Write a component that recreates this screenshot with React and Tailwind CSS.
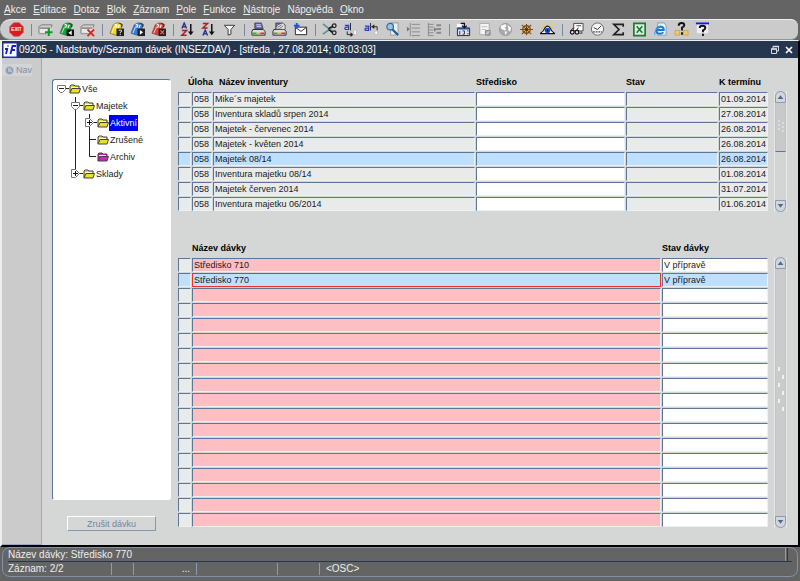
import { useState } from "react";

const menuItems = [
  ["", "A", "kce"],
  ["", "E", "ditace"],
  ["", "D", "otaz"],
  ["", "B", "lok"],
  ["", "Z", "áznam"],
  ["", "P", "ole"],
  ["", "F", "unkce"],
  ["", "N", "ástroje"],
  ["Náp", "o", "věda"],
  ["", "O", "kno"],
];

const inventories = [
  { name: "Mike´s majetek", date: "01.09.2014" },
  { name: "Inventura skladů srpen 2014", date: "27.08.2014" },
  { name: "Majetek - červenec 2014", date: "26.08.2014" },
  { name: "Majetek - květen 2014", date: "26.08.2014" },
  { name: "Majetek 08/14", date: "26.08.2014" },
  { name: "Inventura majetku 08/14", date: "01.08.2014" },
  { name: "Majetek červen 2014", date: "31.07.2014" },
  { name: "Inventura majetku 06/2014", date: "01.06.2014" },
];

const batches = [
  { name: "Středisko 710", state: "V přípravě" },
  { name: "Středisko 770", state: "V přípravě" },
  ...Array.from({ length: 16 }, () => ({ name: "", state: "" })),
];

const Record = () => (
  <>
    <path d="M1 5h13v7H1z" fill="#d9d9d9" />
    <path d="M1 12V5l3-2h11l-1 3" fill="none" stroke="#7d7d7d" />
    <path d="M2 6.500h11" stroke="#555" />
    <path d="M2 8.500h11M2 10.500h8" stroke="#f7f7f7" />
    <path d="M1 12.500h8" stroke="#8a8a8a" />
  </>
);

const Book = ({ color }) => (
  <>
    <path d="M1 12L4.500 3 8 1h3l3 2-3 9-4 2z" fill={color} stroke="#4a4a3a" strokeWidth=".6" />
    <path d="M6 3.500l2-1.500M7 6l1.500-3M9.500 6.500L11 3" fill="none" stroke="#fff" strokeWidth="1.200" />
    <path d="M3 12l3-7" stroke="#fff" strokeWidth=".8" />
    <path d="M11 1.500l3 1-.5 3" fill="none" stroke="#222" />
  </>
);

const Printer = () => (
  <>
    <path d="M4 1h7l2 6H4z" fill="#5a60b8" stroke="#444" strokeWidth=".8" />
    <path d="M5.500 3h5M6 5h5" stroke="#dfe3ff" />
    <path d="M2 8h11l2 2v4H1v-4z" fill="#ddd" stroke="#222" />
    <path d="M2 12h4" stroke="#1b1" strokeWidth="1.500" />
    <path d="M6 12h4" stroke="#eb0" strokeWidth="1.500" />
    <path d="M10 12h4" stroke="#d22" strokeWidth="1.500" />
  </>
);

const icons = {
  addRecord: (
    <>
      <Record />
      <path d="M11.500 7v8M7.500 11h8" stroke="#0a9c1c" strokeWidth="2.200" />
    </>
  ),
  prevBlock: (
    <>
      <Book color="#12a53a" />
      <path d="M8 8h8v7H8z" fill="#111" />
      <path d="M13.500 9v5L10 11.500z" fill="#fff" />
    </>
  ),
  removeRecord: (
    <>
      <Record />
      <path d="M8 8l7 7M15 8l-7 7" stroke="#e0231c" strokeWidth="2" />
    </>
  ),
  enterQuery: (
    <>
      <Book color="#f2d51f" />
      <path d="M8 7h8v8H8z" fill="#222" />
      <path d="M10.500 9.500q0-1 1.500-1t1.500 1q0 1-1.500 1.500v1M12 13v1" fill="none" stroke="#fff" />
    </>
  ),
  runQuery: (
    <>
      <Book color="#2f7de0" />
      <path d="M8 7h8v8H8z" fill="#222" />
      <path d="M10.500 8.500v5L14 11z" fill="#fff" />
    </>
  ),
  cancelQuery: (
    <>
      <Book color="#e23b35" />
      <path d="M8 7h8v8H8z" fill="#222" />
      <path d="M10 9l4 4M14 9l-4 4" stroke="#f66" strokeWidth="1.200" />
    </>
  ),
  sortAsc: (
    <>
      <path d="M2 7l2.500-6L7 7M3 5h3" fill="none" stroke="#33358c" strokeWidth="1.500" />
      <path d="M2 9h5l-5 5h5" fill="none" stroke="#a3222a" strokeWidth="1.600" />
      <path d="M11.500 2v9" stroke="#111" strokeWidth="1.600" />
      <path d="M8.500 10h6l-3 4z" fill="#111" />
    </>
  ),
  sortDesc: (
    <>
      <path d="M2 1.500h5L2 6.500h5" fill="none" stroke="#a3222a" strokeWidth="1.600" />
      <path d="M2 14.500l2.500-6 2.500 6M3 12.500h3" fill="none" stroke="#33358c" strokeWidth="1.500" />
      <path d="M11.500 2v9" stroke="#111" strokeWidth="1.600" />
      <path d="M8.500 10h6l-3 4z" fill="#111" />
    </>
  ),
  filter: <path d="M2.500 3.500h11L9.500 8v5l-3 1V8z" fill="#f4f4f4" stroke="#333" />,
  print: <Printer />,
  printPreview: (
    <>
      <Printer />
      <path d="M3.500 7.500L6 3l5-2 3 2v5z" fill="#e6e6e6" stroke="#555" />
      <path d="M6 6l4-3M8 7l4-3" fill="none" stroke="#666" />
    </>
  ),
  mail: (
    <>
      <path d="M2.500 5.500h12v8h-12z" fill="#fff" stroke="#222" />
      <path d="M3 6l5.500 4L14 6" fill="none" stroke="#222" />
      <path d="M4 1v6M1 4h6" stroke="#1b55df" strokeWidth="2" />
    </>
  ),
  cut: (
    <>
      <path d="M1 2l10 8M1 13L12 5" stroke="#5c8f8d" strokeWidth="1.800" />
      <path d="M7 7l5-3M7 8l4 3" stroke="#111" strokeWidth="1.500" />
      <circle cx="13" cy="4" r="2" fill="none" stroke="#222" strokeWidth="1.300" />
      <circle cx="13" cy="11.500" r="2" fill="none" stroke="#222" strokeWidth="1.300" />
    </>
  ),
  copy: (
    <>
      <path d="M2 3.500h4V8H3.500Q2 8 2 6.800T3.500 5.500H6" fill="none" stroke="#2837dc" strokeWidth="1.300" />
      <path d="M8 1v8M4.500 10v3.500h4" fill="none" stroke="#222" />
      <path d="M8 11v5l3-2.500z" fill="#222" />
      <path d="M11.500 8.500h3v5h-3z" fill="#fff" stroke="#bbb" />
    </>
  ),
  paste: (
    <>
      <path d="M1 4.500h4V9H2.500Q1 9 1 7.800T2.500 6.500H5" fill="none" stroke="#2837dc" strokeWidth="1.300" />
      <path d="M7 1v8M8 5h6v4" fill="none" stroke="#222" />
      <path d="M11 2.500v5L8 5z" fill="#222" />
      <path d="M11.500 9.500h3v4h-3z" fill="#fff" stroke="#bbb" />
    </>
  ),
  find: (
    <>
      <path d="M6 1h8v10l-3 3H6z" fill="#eee" stroke="#999" />
      <circle cx="5.500" cy="5" r="3.500" fill="#8cc9ee" stroke="#38698f" strokeWidth="1.300" />
      <path d="M8 8l6 6" stroke="#255f9c" strokeWidth="2.500" />
    </>
  ),
  indent: (
    <>
      <path d="M4.500 1v14M6 2.500h9M6 6.500h9M6 10.500h9M6 14.500h9" stroke="#8a8a8a" />
      <path d="M1 5v5l3-2.500z" fill="#777" />
    </>
  ),
  outline: (
    <>
      <path d="M1.500 1v13M1 2.500h6M1 5.500h6M1 8.500h6M1 11.500h6M1 14.500h6" stroke="#8a8a8a" />
      <path d="M10 3.500h5M10 7.500h5M10 11.500h5" stroke="#8a8a8a" strokeWidth="2" />
      <path d="M7.500 5.500v5l3-2.500z" fill="#777" />
    </>
  ),
  calendar: (
    <>
      <path d="M1 2h5v4H1z" fill="#fff" />
      <path d="M1.500 6.500h13v8h-13z" fill="#dfe2ee" stroke="#222" />
      <path d="M1 7h14" stroke="#234ab6" strokeWidth="2" />
      <path d="M4 9.500v4M7 9.500h2v3.500H7M12 9.500h1.500M12 12.500h1.500" fill="none" stroke="#333" />
      <path d="M5 1.500h4V5M6.500 4L9 6l2.500-2" fill="none" stroke="#111" strokeWidth="1.300" />
    </>
  ),
  note: (
    <>
      <path d="M3 1.500h10v12H3z" fill="#f5f5f5" stroke="#aaa" />
      <path d="M5 5h6M5 8h4" stroke="#bbb" />
      <path d="M9 9h5v5H9z" fill="#aaa" stroke="#888" />
      <path d="M10 13l3-3" stroke="#eee" />
    </>
  ),
  globe: (
    <>
      <circle cx="8" cy="8" r="6.500" fill="#a9a9a9" stroke="#999" />
      <path d="M3 4l5-2 1 3-2 1 2 2-2 1-4-2zM10 3l4 3-1 4-2-1 0-3zM7 10l3 0-2 4z" fill="#fafafa" />
    </>
  ),
  wheel: (
    <>
      <circle cx="8" cy="8" r="4" fill="#f0d78d" stroke="#804d14" strokeWidth="1.500" />
      <path d="M1 8h14M8 2v12M3 3l10 10M13 3L3 13" stroke="#804d14" strokeWidth="1.200" />
      <circle cx="8" cy="8" r="1.500" fill="#51300d" />
    </>
  ),
  eye: (
    <>
      <path d="M8 0v3M3 2l2 3M13 2l-2 3M1 6l3 1M15 6l-3 1" stroke="#efcf2c" strokeWidth="1.300" />
      <path d="M0 12.500Q4 10 5.500 6 8 3 10.500 6 12 10 16 12.500z" fill="#fff" stroke="#111" strokeWidth="1.300" />
      <circle cx="8" cy="9" r="3" fill="#1b4be0" />
      <circle cx="8" cy="9" r="1" fill="#000" />
    </>
  ),
  glasses: (
    <>
      <path d="M5 1.500h10v8H5z" fill="#fff" stroke="#444" />
      <path d="M8 4h5M13 10l1 2h-3" fill="none" stroke="#444" />
      <circle cx="3.500" cy="11" r="2" fill="#ddd" stroke="#111" strokeWidth="1.300" />
      <circle cx="8.500" cy="11" r="2" fill="#ddd" stroke="#111" strokeWidth="1.300" />
      <path d="M2 9l3-3M8 9l2-3" stroke="#111" />
    </>
  ),
  clock: (
    <>
      <circle cx="8" cy="7.500" r="6.500" fill="#f5f5f5" stroke="#666" />
      <path d="M8 8l4-4M8 8L4 6" stroke="#333" />
      <path d="M3 10.500h10" stroke="#777" strokeWidth="2" strokeDasharray="2 1" />
    </>
  ),
  sum: <path d="M13 5V2.500H3L8.500 8 3 13.500h10V11" fill="none" stroke="#222" strokeWidth="1.800" />,
  sheet: (
    <>
      <path d="M2 1.500h12v13H2z" fill="#d9efdc" stroke="#1a7a36" strokeWidth="1.800" />
      <path d="M5 4.500l6 7M11 4.500l-6 7" stroke="#1a7a36" strokeWidth="1.700" />
    </>
  ),
  browser: (
    <>
      <path d="M5 1h7l2 3v10H5z" fill="#edf3fa" stroke="#7e9ab8" />
      <path d="M3.500 8.500h8Q11.500 5 8 5T3.500 8.500 7.500 12.500q2.500 0 3.500-1.500" fill="none" stroke="#1d7bd0" strokeWidth="2" />
      <path d="M2 14Q0 10 8 3.500" fill="none" stroke="#4ca5e8" />
    </>
  ),
  who: (
    <>
      <path d="M1 9h5v5H1zM10 9h5v5h-5z" fill="#f1c767" stroke="#c79a3b" strokeWidth=".7" />
      <path d="M5 4q0-3 3-3t3 2.500Q11 5 8.500 6v3" fill="none" stroke="#111" strokeWidth="2" />
      <path d="M7.500 11h2v2.500h-2z" fill="#111" />
    </>
  ),
  help: (
    <>
      <path d="M2 1h12v11H2z" fill="#eee" />
      <path d="M1 1.500h14" stroke="#1717e8" strokeWidth="2" />
      <path d="M5 6.500q0-2.500 3-2.500t3 2Q11 8 8.500 9v2" fill="none" stroke="#111" strokeWidth="2" />
      <path d="M7.500 12.500h2V15h-2z" fill="#111" />
    </>
  ),
};

const toolGroups = [
  [["addRecord", "Nový záznam"], ["prevBlock", "Předchozí blok"], ["removeRecord", "Smazat záznam"]],
  [["enterQuery", "Zadat dotaz"], ["runQuery", "Provést dotaz"], ["cancelQuery", "Zrušit dotaz"]],
  [["sortAsc", "Seřadit vzestupně"], ["sortDesc", "Seřadit sestupně"], ["filter", "Filtr"]],
  [["print", "Tisk"], ["printPreview", "Náhled tisku"], ["mail", "Odeslat"]],
  [["cut", "Vyjmout"], ["copy", "Kopírovat"], ["paste", "Vložit"], ["find", "Hledat"], ["indent", "Odsadit"], ["outline", "Osnova"]],
  [["calendar", "Kalendář"], ["note", "Poznámka"], ["globe", "Web"], ["wheel", "Navigace"], ["eye", "Zobrazit"]],
  [["glasses", "Prohlížet"], ["clock", "Historie"], ["sum", "Součet"], ["sheet", "Export"], ["browser", "Prohlížeč"], ["who", "Kdo"], ["help", "Nápověda"]],
];

const Folder = ({ color }) => (
  <svg viewBox="0 0 12 10" className="h-[10px] w-3 shrink-0">
    <path d="M1 9V2l1-1h3l1 1h4v2" fill={color} stroke="#444" />
    <path d="M1 9l2-4.500h8.500L10 9z" fill={color} stroke="#444" />
    <path d="M2 3.500h7" stroke="#fff" />
  </svg>
);

const treeNodes = [
  {
    label: "Vše",
    width: "w-4",
    size: 16,
    color: "#e9e02c",
    lines: "M11 8.500h5",
    open: 8,
  },
  {
    label: "Majetek",
    width: "w-[30px]",
    size: 30,
    color: "#e9e02c",
    lines: "M22.500 0v17M25 8.500h5",
    open: 22,
  },
  {
    label: "Aktivní",
    width: "w-11",
    size: 44,
    color: "#e9e02c",
    lines: "M22.500 0v17M36.500 0v17M39 8.500h5",
    closed: 36,
  },
  {
    label: "Zrušené",
    width: "w-11",
    size: 44,
    color: "#e9e02c",
    lines: "M22.500 0v17M36.500 0v17M36 8.500h7",
  },
  {
    label: "Archiv",
    width: "w-11",
    size: 44,
    color: "#d420c8",
    lines: "M22.500 0v17M36.500 0v8.500h6.500",
  },
  {
    label: "Sklady",
    width: "w-[30px]",
    size: 30,
    color: "#e9e02c",
    lines: "M22.500 0v8M25 8.500h5",
    closed: 22,
  },
];

const Tree = () => {
  const [selected, setSelected] = useState("Aktivní");

  return (
    <ul className="flex-1 rounded-[3px] border border-r-white border-b-white border-l-[#5f7797] border-t-[#5f7797] bg-white">
      {treeNodes.map((node) => (
        <li key={node.label} className="flex h-[17px] items-center">
          <svg viewBox={`0 0 ${node.size} 17`} className={`h-[17px] shrink-0 ${node.width}`}>
            <path d={node.lines} fill="none" stroke="#222" />
            {node.open && (
              <g transform={`translate(${node.open} 0)`}>
                <path d="M-3.500 5.500h8v4l-3 3h-2l-3-3z" fill="#fff" stroke="#777" />
                <path d="M-2 8.500h5" stroke="#222" />
              </g>
            )}
            {node.closed && (
              <g transform={`translate(${node.closed} 0)`}>
                <path d="M-3.500 4.500h4l4 4-4 4h-4z" fill="#fff" stroke="#777" />
                <path d="M-2 8.500h5M.5 6v5" stroke="#111" />
              </g>
            )}
          </svg>
          <Folder color={node.color} />
          <button
            onClick={() => setSelected(node.label)}
            className={
              selected === node.label
                ? "h-4 bg-[#0000f0] px-px text-white"
                : "h-4 px-px text-[#222]"
            }
          >
            {node.label}
          </button>
        </li>
      ))}
    </ul>
  );
};

const fieldBase =
  "block h-[14px] w-full border border-t-[#5f7797] border-l-[#5f7797] border-r-[#eef0f0] border-b-[#eef0f0] pl-px text-[#1a1a1a] outline-none";

const Field = ({ value, label, tone }) => (
  <td className="p-0 pr-px pb-px">
    <input className={`${fieldBase} ${tone}`} defaultValue={value} aria-label={label} />
  </td>
);

const Scrollbar = ({ full }) => (
  <div className="flex w-[13px] shrink-0 flex-col border-x border-[#e6e8e8] bg-[#d3d4d4]">
    <button aria-label="Nahoru" className="h-3 rounded-t-full border border-[#8b9bb2] bg-[#d3d7dc]">
      <svg viewBox="0 0 11 10" className="h-full w-full">
        <path d="M2 7.500h7L5.500 3z" fill="#50698f" />
      </svg>
    </button>
    <div
      className={
        full
          ? "flex flex-1 items-center justify-center border-x border-[#c3c4c8] bg-[#cbcbcd]"
          : "flex h-[49px] items-center justify-center border-x border-b border-x-[#bfc1c6] border-b-[#5f7797] bg-[#c9c9cc]"
      }
    >
      <svg viewBox="0 0 8 16" className={full ? "h-16 w-2" : "h-4 w-2"} preserveAspectRatio="none">
        <path d="M1 2h2M5 4h2M1 6h2M5 8h2M1 10h2M5 12h2" stroke="#f0f0f0" strokeWidth="1" />
      </svg>
    </div>
    <button
      aria-label="Dolů"
      className="mt-auto h-3 rounded-b-full border border-[#8b9bb2] bg-[#d3d7dc]"
    >
      <svg viewBox="0 0 11 10" className="h-full w-full">
        <path d="M2 2.500h7L5.500 7z" fill="#50698f" />
      </svg>
    </button>
  </div>
);

const InventoryTable = () => (
  <div className="flex items-end gap-[5px]">
    <table className="w-full table-fixed border-separate border-spacing-0">
      <thead>
        <tr className="h-4 text-left align-top whitespace-nowrap">
          <th className="w-[14px] p-0" />
          <th className="w-[21px] p-0">
            <span className="-ml-1">Úloha</span>
          </th>
          <th className="p-0 pl-[6px]">Název inventury</th>
          <th className="w-[150px] p-0">Středisko</th>
          <th className="w-[93px] p-0">Stav</th>
          <th className="w-[50px] p-0">K termínu</th>
        </tr>
      </thead>
      <tbody>
        {inventories.map((row, idx) => {
          const active = idx === 4;
          const gray = active ? "bg-[#bfdfff]" : "bg-[#e9ebeb]";
          return (
            <tr key={idx}>
              <Field value="" label="Výběr" tone={gray} />
              <Field value="058" label="Úloha" tone={gray} />
              <Field value={row.name} label="Název inventury" tone={gray} />
              <Field value="" label="Středisko" tone={active ? "bg-[#bfdfff]" : "bg-white"} />
              <Field value="" label="Stav" tone={gray} />
              <Field value={row.date} label="K termínu" tone={gray} />
            </tr>
          );
        })}
      </tbody>
    </table>
    <div className="flex h-[121px]">
      <Scrollbar />
    </div>
  </div>
);

const BatchTable = () => (
  <div className="flex items-end gap-[5px]">
    <table className="w-full table-fixed border-separate border-spacing-0">
      <thead>
        <tr className="h-4 text-left align-top whitespace-nowrap">
          <th className="w-[14px] p-0" />
          <th className="p-0">Název dávky</th>
          <th className="w-[107px] p-0">Stav dávky</th>
        </tr>
      </thead>
      <tbody>
        {batches.map((row, idx) => {
          const active = idx === 1;
          return (
            <tr key={idx}>
              <Field value="" label="Výběr" tone={active ? "bg-[#bfdfff]" : "bg-[#e9ebeb]"} />
              <Field
                value={row.name}
                label="Název dávky"
                tone={active ? "bg-[#bfdfff] border-[#f03028]!" : "bg-[#fdbfc1]"}
              />
              <Field value={row.state} label="Stav dávky" tone={active ? "bg-[#bfdfff]" : "bg-white"} />
            </tr>
          );
        })}
      </tbody>
    </table>
    <div className="flex h-[271px]">
      <Scrollbar full />
    </div>
  </div>
);

const Separator = () => (
  <div className="flex w-2 justify-center">
    <span className="h-3 w-px bg-[#7688a5]" />
  </div>
);

const App = () => {
  return (
    <div className="flex min-h-screen flex-col bg-[#646464] font-['Liberation_Sans',Arial,sans-serif] text-[9px] leading-3">
      <nav className="flex h-[19px] items-center gap-[7px] pl-1 text-[10px] text-[#eee]">
        {menuItems.map(([before, key, after]) => (
          <button key={before + key + after}>
            {before}
            <u>{key}</u>
            {after}
          </button>
        ))}
      </nav>

      <div className="mr-[2px] flex h-[21px] items-center rounded-r-lg rounded-l-xl border-t border-b border-t-[#eee] border-b-[#8a9a9e] bg-[#cbcbcb] pl-[6px]">
        <button
          aria-label="Konec"
          className="flex w-[21px] items-center justify-center"
        >
          <svg viewBox="0 0 16 16" className="h-[15px] w-[15px]">
            <path d="M5 1h6l4 4v6l-4 4H5l-4-4V5z" fill="#de1727" stroke="#c9303c" />
            <text x="8" y="10" textAnchor="middle" fontSize="5" fontWeight="bold" fill="#fff">
              EXIT
            </text>
          </svg>
        </button>
        {toolGroups.map((group, idx) => (
          <div key={idx} className="flex items-center">
            <Separator />
            {group.map(([icon, label]) => (
              <button key={icon} aria-label={label} className="flex w-[21px] justify-center">
                <svg viewBox="0 0 16 16" className="h-[15px] w-[15px]">
                  {icons[icon]}
                </svg>
              </button>
            ))}
          </div>
        ))}
      </div>

      <div className="flex flex-1 flex-col border-t border-r-2 border-b-2 border-l-2 border-t-[#eee] border-r-black border-b-black border-l-[#eee] bg-[#d5d7d7]">
        <header className="flex h-[17px] items-center bg-[#27364f] pr-1 text-white">
          <svg viewBox="0 0 16 16" className="h-4 w-4">
            <path d="M1 1h14v14H1z" fill="#fff" stroke="#1c2bd0" />
            <path d="M5.500 6L4 12M6 3.500v1M8.500 12l2-8H14M9.500 8H13M3 7h2" fill="none" stroke="#1420c8" strokeWidth="1.800" />
          </svg>
          <h1 className="pl-px text-[10px]">
            09205 - Nadstavby/Seznam dávek (INSEZDAV) - [středa , 27.08.2014; 08:03:03]
          </h1>
          <button aria-label="Obnovit" className="ml-auto">
            <svg viewBox="0 0 10 10" className="h-[10px] w-[10px]">
              <path d="M3 3V1.500h5.500V6H7M1.500 4h5v4.500h-5z" fill="none" stroke="#d5dbe5" />
              <path d="M3 1.500h6M1 4h6" stroke="#d5dbe5" strokeWidth="1.500" />
            </svg>
          </button>
          <button aria-label="Zavřít" className="ml-1">
            <svg viewBox="0 0 10 10" className="h-[10px] w-[10px]">
              <path d="M2 2l6 6M8 2L2 8" stroke="#fff" strokeWidth="1.700" />
            </svg>
          </button>
        </header>

        <div className="flex flex-1">
          <aside className="w-10 border-r border-b border-[#9aa8c0] bg-[#cbcbcc] pt-[6px]">
            <button className="flex items-center gap-[2px] bg-[#d3d4d5] pl-[3px] text-[#7f8ea8]">
              <svg viewBox="0 0 9 9" className="h-[9px] w-[9px]">
                <circle cx="4.500" cy="4.500" r="4" fill="#8b99ae" stroke="#b9c3d0" />
                <path d="M3 3h3M3 5h4" stroke="#dfe4ea" />
              </svg>
              Nav
            </button>
          </aside>

          <main className="flex flex-1 gap-[7px] pt-[18px] pr-[11px] pb-[14px] pl-[10px]">
            <div className="flex w-[119px] shrink-0 flex-col pt-[3px]">
              <Tree />
              <button className="mx-[15px] mt-4 h-[15px] border border-t-white border-l-white border-r-[#8496b0] border-b-[#8496b0] text-[#7184a3]">
                Zrušit dávku
              </button>
            </div>
            <div className="flex min-w-0 flex-1 flex-col gap-[30px]">
              <InventoryTable />
              <BatchTable />
            </div>
          </main>
        </div>
      </div>

      <footer className="px-[2px] pb-1 text-[10px] text-[#eee]">
        <div className="rounded-lg border border-[#8290a8] px-[5px]">
          <div className="flex h-[14px] items-center border-b border-[#27364f]">
            Název dávky: Středisko 770
            <span className="mr-1 ml-auto h-full w-[3px] border-x border-l-[#8b9bb8] border-r-[#27364f]" />
          </div>
          <div className="flex h-[14px] items-center">
            <span className="h-3 w-[104px] border-r border-[#8b9bb8]">Záznam: 2/2</span>
            <span className="h-3 w-[22px] border-r border-[#8b9bb8]" />
            <span className="h-3 w-[63px] border-r border-[#8b9bb8] pr-[6px] text-right">...</span>
            <span className="h-3 w-[81px] border-r border-[#8b9bb8]" />
            <span className="h-3 w-[42px] border-r border-[#8b9bb8]" />
            <span className="pl-[6px]">&lt;OSC&gt;</span>
          </div>
        </div>
      </footer>
    </div>
  );
};

export default App;
